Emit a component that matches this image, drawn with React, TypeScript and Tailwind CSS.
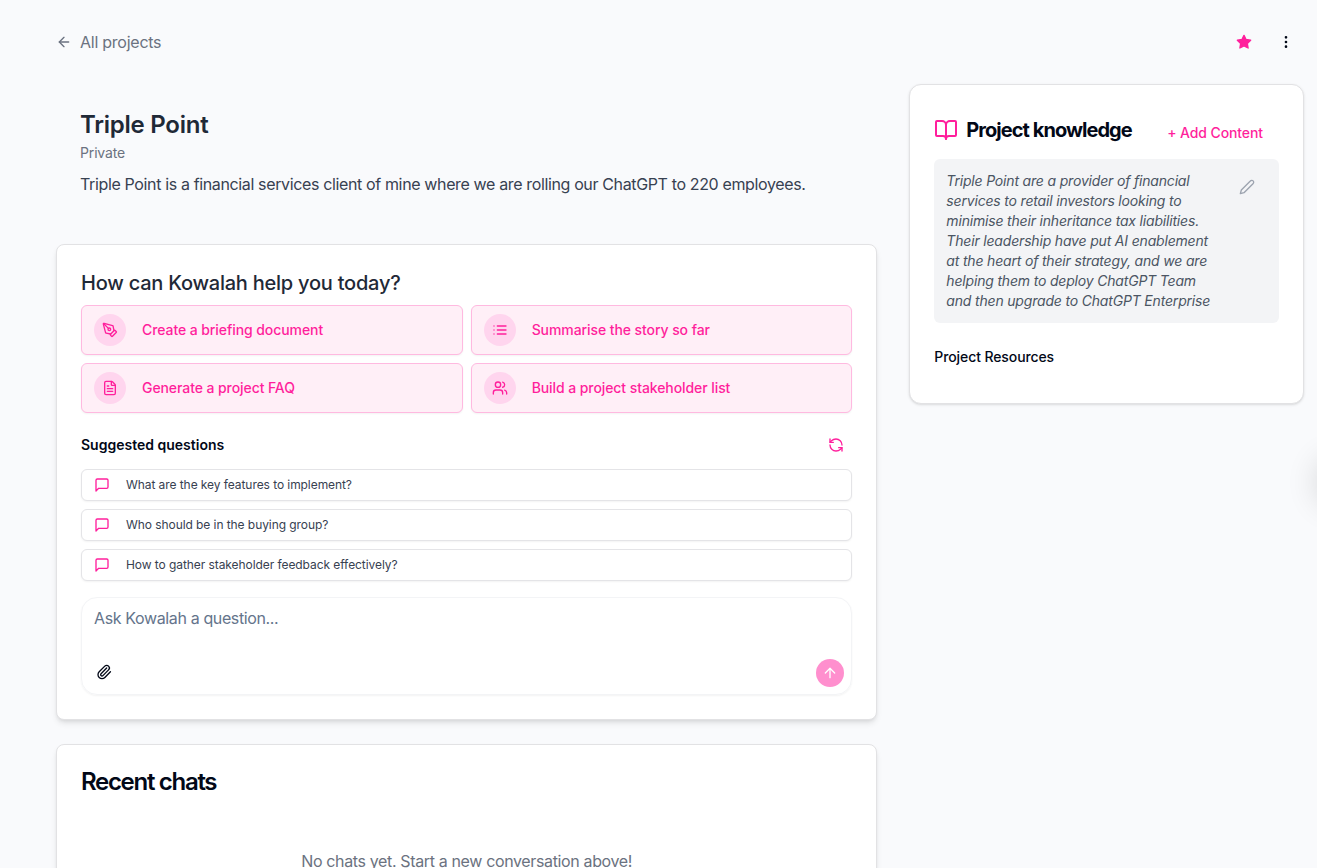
import React from 'react';
import {
  ArrowLeft,
  ArrowUp,
  BookOpen,
  EllipsisVertical,
  FileText,
  Paperclip,
  PenTool,
  RefreshCcw,
  Users,
} from 'lucide-react';

const strokeProps = {
  viewBox: '0 0 24 24',
  fill: 'none',
  stroke: 'currentColor',
  strokeWidth: 2,
  strokeLinecap: 'round',
  strokeLinejoin: 'round',
} as const;

const ListIcon = ({ className }: { className?: string }) => (
  <svg {...strokeProps} className={className}>
    <path d="M8 6h13M8 12h13M8 18h13M3 6h.01M3 12h.01M3 18h.01" />
  </svg>
);

const MessageIcon = ({ className }: { className?: string }) => (
  <svg {...strokeProps} className={className}>
    <path d="M21 15a2 2 0 0 1-2 2H7l-4 4V5a2 2 0 0 1 2-2h14a2 2 0 0 1 2 2z" />
  </svg>
);

const PencilIcon = ({ className }: { className?: string }) => (
  <svg {...strokeProps} className={className}>
    <path d="M17 3a2.85 2.83 0 1 1 4 4L7.5 20.5 2 22l1.5-5.5Z" />
  </svg>
);

const StarIcon = ({ className }: { className?: string }) => (
  <svg {...strokeProps} className={className}>
    <polygon
      fill="currentColor"
      points="12 2 15.09 8.26 22 9.27 17 14.14 18.18 21.02 12 17.77 5.82 21.02 7 14.14 2 9.27 8.91 8.26 12 2"
    />
  </svg>
);

const actions = [
  { icon: PenTool, label: 'Create a briefing document' },
  { icon: ListIcon, label: 'Summarise the story so far' },
  { icon: FileText, label: 'Generate a project FAQ' },
  { icon: Users, label: 'Build a project stakeholder list' },
];

const questions = [
  'What are the key features to implement?',
  'Who should be in the buying group?',
  'How to gather stakeholder feedback effectively?',
];

const ActionButton = ({ icon: Icon, label }: { icon: React.ElementType; label: string }) => (
  <button className="flex h-[50px] items-center rounded-md border border-[#ffb9e0] bg-[#ffeff7] px-3 text-left shadow-xs">
    <span className="mr-4 flex h-8 w-8 items-center justify-center rounded-full bg-[#ffd5ee]">
      <Icon className="h-4 w-4 text-[#ff1f9c]" />
    </span>
    <span className="text-sm font-medium tracking-[-0.08px] text-[#ff1f9c]">{label}</span>
  </button>
);

const SuggestedQuestion = ({ text }: { text: string }) => (
  <button className="flex h-8 w-full items-center rounded-md border border-[#e4e4e7] bg-white px-3 text-left shadow-xs">
    <MessageIcon className="mr-4 h-4 w-4 text-[#ff1f9c]" />
    <span className="text-xs tracking-[-0.07px] text-[#374151]">{text}</span>
  </button>
);

const ProjectKnowledge = () => (
  <div className="h-80 rounded-xl border border-[#e2e2e4] bg-white px-6 pt-[33px] shadow-sm">
    <div className="flex h-6 items-center">
      <BookOpen className="mr-2 h-6 w-6 text-[#ff1f9c]" />
      <h2 className="text-xl leading-6 font-bold tracking-[-0.95px] text-[#020817]">Project knowledge</h2>
      <button className="mt-1.5 mr-4 ml-auto text-sm font-medium tracking-[-0.1px] text-[#ff1f9c]">
        + Add Content
      </button>
    </div>
    <div className="mt-[17px] flex justify-between rounded-md bg-[#f3f4f6] p-3">
      <p className="w-[268px] text-sm tracking-[-0.18px] text-[#4b5563] italic">
        Triple Point are a provider of financial services to retail investors looking to minimise their inheritance tax
        liabilities. Their leadership have put AI enablement at the heart of their strategy, and we are helping them to
        deploy ChatGPT Team and then upgrade to ChatGPT Enterprise
      </p>
      <PencilIcon className="mt-2 mr-3 h-4 w-4 text-[#9ca3af]" />
    </div>
    <h3 className="mt-6 text-sm font-medium tracking-[-0.1px] text-[#020817]">Project Resources</h3>
  </div>
);

const App = () => {
  return (
    <div className="relative h-screen overflow-hidden bg-[#f9fafc] font-['Inter',sans-serif] text-[#020817]">
      <div className="ml-14 w-[1248px]">
        {/* Top bar */}
        <div className="flex h-[84px] items-center justify-between pr-2.5">
          <button className="flex items-center gap-2 text-[#6b7280]">
            <ArrowLeft className="h-4 w-4" />
            <span className="tracking-[-0.25px]">All projects</span>
          </button>
          <div className="flex items-center gap-[26px]">
            <StarIcon className="h-4 w-4 text-[#ff1f9c]" />
            <EllipsisVertical className="h-4 w-4" />
          </div>
        </div>

        <div className="grid grid-cols-3 items-start gap-8">
          <div className="col-span-2">
            {/* Project summary */}
            <div className="px-6 pt-[25px] pb-6">
              <h1 className="text-2xl font-semibold tracking-[-0.25px] text-[#1f2937]">Triple Point</h1>
              <p className="mt-0.5 text-sm tracking-[-0.15px] text-[#6b7280]">Private</p>
              <p className="mt-[9px] tracking-[-0.362px] text-[#374151]">
                Triple Point is a financial services client of mine where we are rolling our ChatGPT to 220 employees.
              </p>
            </div>

            {/* Assistant */}
            <div className="mt-6 h-[476px] rounded-lg border border-[#e2e2e4] bg-white p-6 shadow-md">
              <h2 className="mb-2 text-xl font-medium tracking-[-0.23px] text-[#1f2937]">
                How can Kowalah help you today?
              </h2>
              <div className="grid grid-cols-2 gap-2">
                {actions.map((action) => (
                  <ActionButton key={action.label} icon={action.icon} label={action.label} />
                ))}
              </div>

              <div className="mt-4 flex h-8 items-center justify-between pr-2">
                <h3 className="text-sm font-semibold">Suggested questions</h3>
                <RefreshCcw className="h-4 w-4 text-[#ff1f9c]" />
              </div>
              <div className="mt-2 space-y-2">
                {questions.map((question) => (
                  <SuggestedQuestion key={question} text={question} />
                ))}
              </div>

              <div className="mt-4 flex h-[98px] flex-col justify-between rounded-2xl border border-[#f3f4f6] pt-2 pr-[7px] pb-[7px] pl-3 shadow-xs">
                <p className="tracking-[-0.37px] text-[#64748b]">Ask Kowalah a question...</p>
                <div className="flex items-center justify-between">
                  <Paperclip className="mb-0.5 ml-[1.5px] h-4 w-4" />
                  <button className="flex h-7 w-7 items-center justify-center rounded-full bg-[#ff8fce] text-white">
                    <ArrowUp className="h-4 w-4" />
                  </button>
                </div>
              </div>
            </div>

            {/* Recent chats */}
            <div className="mt-6 h-60 rounded-lg border border-[#e2e2e4] bg-white px-6 pt-[25px] shadow-md">
              <h2 className="text-2xl leading-none font-semibold tracking-[-1.3px]">Recent chats</h2>
              <p className="mt-[55px] text-center tracking-[-0.36px] text-[#6b7280]">
                No chats yet. Start a new conversation above!
              </p>
            </div>
          </div>

          <ProjectKnowledge />
        </div>
      </div>

      {/* Launcher parked past the right edge, only its shadow shows */}
      <div className="absolute top-[458px] -right-12 h-12 w-12 rounded-full bg-white shadow-[0_0_32px_rgba(0,0,0,0.16)]" />
    </div>
  );
};

export default App;
